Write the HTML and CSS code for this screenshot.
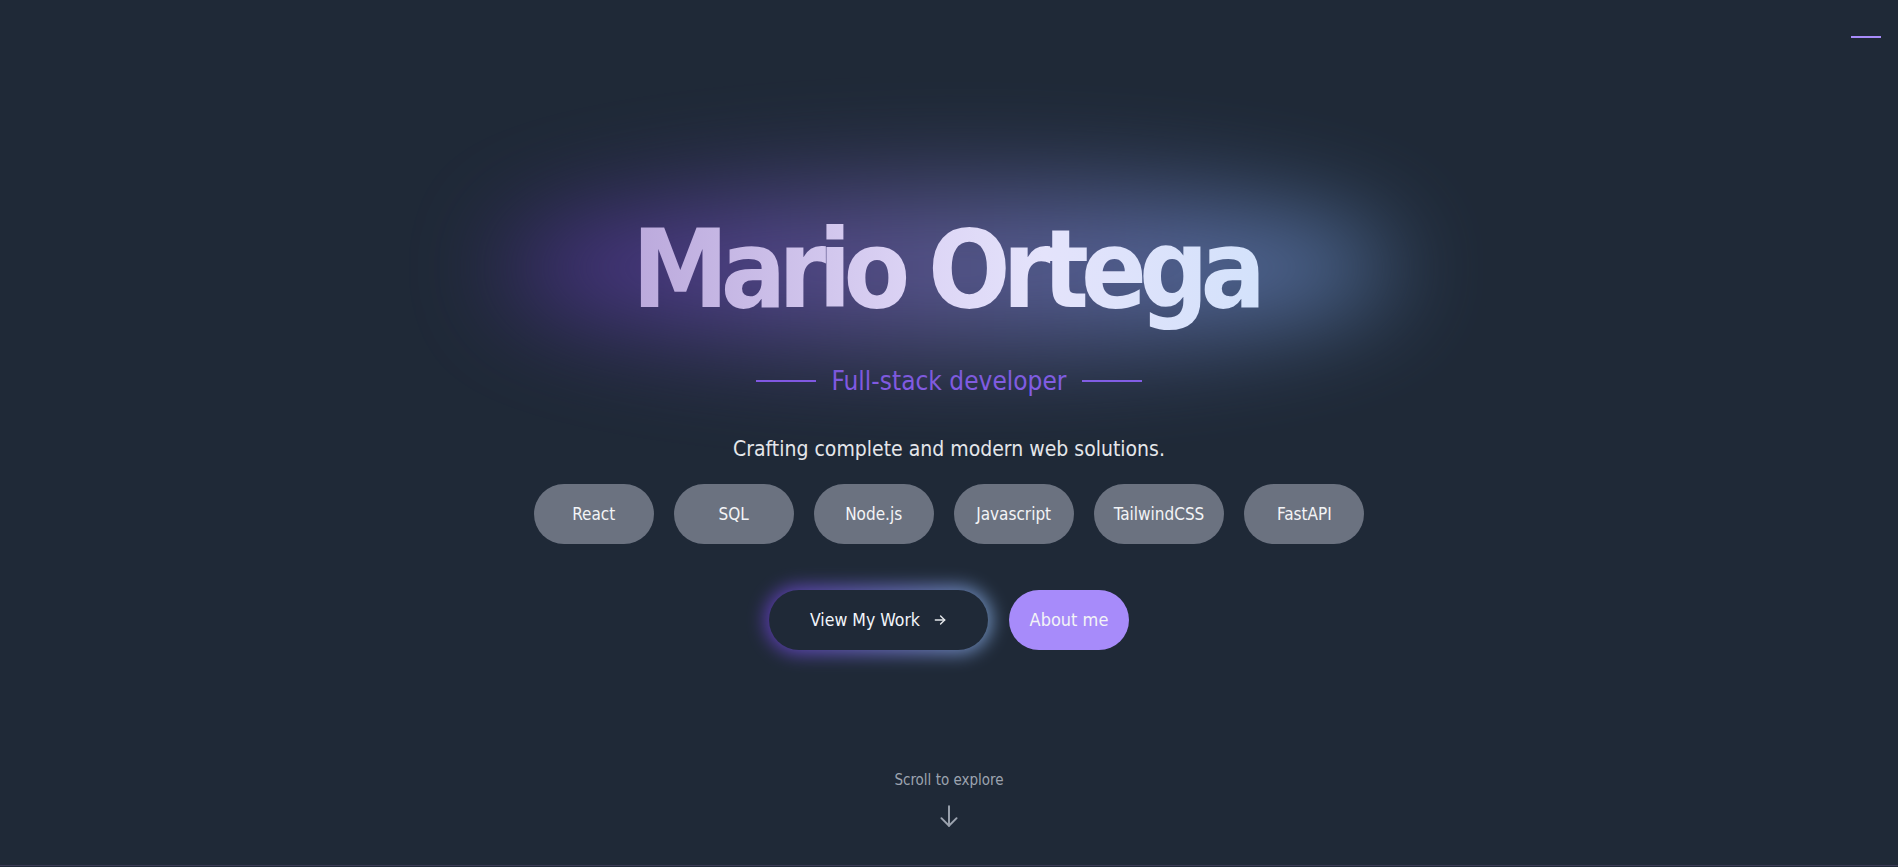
FILE: index.html
```html
<!DOCTYPE html>
<html lang="en">
<head>
<meta charset="utf-8">
<title>Mario Ortega</title>
<link rel="stylesheet" href="styles.css">
</head>
<body>
<button class="menu-btn" aria-label="Menu"><span class="menu-line"></span></button>
<section class="hero">
  <div class="hero-spacer"></div>
  <div class="hero-content">
    <div class="title-wrap">
      <div class="title-glow"></div>
      <h1 class="title">Mario Ortega</h1>
    </div>
    <div class="subtitle-row">
      <span class="sub-line"></span>
      <h2 class="subtitle">Full-stack developer</h2>
      <span class="sub-line"></span>
    </div>
    <p class="tagline">Crafting complete and modern web solutions.</p>
    <ul class="chips">
      <li class="chip">React</li>
      <li class="chip">SQL</li>
      <li class="chip">Node.js</li>
      <li class="chip">Javascript</li>
      <li class="chip">TailwindCSS</li>
      <li class="chip">FastAPI</li>
    </ul>
    <div class="actions">
      <a class="btn-work" href="#work">
        <span class="btn-work-glow"></span>
        <span class="btn-work-inner">View My Work
          <svg class="btn-arrow" width="14" height="14" viewBox="0 0 24 24" fill="none" stroke="currentColor" stroke-width="2.4" stroke-linecap="round" stroke-linejoin="round"><path d="M4 12h16"/><path d="M13 5l7 7-7 7"/></svg>
        </span>
      </a>
      <a class="btn-about" href="#about">About me</a>
    </div>
  </div>
  <div class="hero-bottom">
    <div class="scroll-hint">
      <span class="scroll-text">Scroll to explore</span>
      <svg class="scroll-arrow" width="26" height="26" viewBox="0 0 24 24" fill="none" stroke="currentColor" stroke-width="1.8" stroke-linecap="round" stroke-linejoin="round"><path d="M12 3v18"/><path d="M5 14l7 7 7-7"/></svg>
    </div>
  </div>
</section>
</body>
</html>
```

FILE: styles.css
```css
* { box-sizing: border-box; }
html, body {
  margin: 0;
  padding: 0;
  background: #1f2937;
  overflow: hidden;
}
body {
  font-family: "DejaVu Sans Condensed", "DejaVu Sans", sans-serif;
  font-stretch: condensed;
  color: #e5e7eb;
}
.menu-btn {
  position: absolute;
  top: 26px;
  right: 12px;
  width: 40px;
  height: 22px;
  padding: 0;
  border: 0;
  background: transparent;
  display: flex;
  align-items: center;
  justify-content: center;
}
.menu-line {
  display: block;
  width: 30px;
  height: 2px;
  background: #a78bfa;
}
.hero {
  height: 866px;
  border-bottom: 1px solid #3b3a55;
  display: grid;
  grid-template-rows: 1fr auto 1fr;
  justify-items: center;
}
.hero-content {
  display: flex;
  flex-direction: column;
  align-items: center;
}
.title-wrap {
  position: relative;
  display: flex;
  justify-content: center;
}
.title-glow {
  position: absolute;
  left: -130px;
  right: -130px;
  top: -30px;
  bottom: -5px;
  border-radius: 50%;
  background: linear-gradient(90deg, #4a2c8c 0%, #5a5590 45%, #5a7eae 100%);
  filter: blur(50px);
  opacity: 0.9;
}
.title {
  position: relative;
  margin: 0;
  padding: 0 8px 20px 0;
  font-size: 108px;
  line-height: 1;
  font-weight: 700;
  letter-spacing: -8px;
  background: linear-gradient(90deg, #bba9dc 0%, #dcd4f5 45%, #e4e3fb 65%, #d3e2fb 100%);
  -webkit-background-clip: text;
  background-clip: text;
  color: transparent;
}
.subtitle-row {
  display: flex;
  align-items: center;
  gap: 16px;
  margin-top: 19px;
}
.sub-line {
  width: 60px;
  height: 2px;
  background: #8b5cf6;
}
.subtitle {
  margin: 0;
  font-size: 26px;
  font-weight: 400;
  color: #8b5cf6;
  line-height: 36px;
}
.tagline {
  margin: 35px 0 0;
  font-size: 21px;
  line-height: 30px;
  color: #e5e7eb;
}
.chips {
  list-style: none;
  margin: 20px 0 0;
  padding: 0;
  display: flex;
  gap: 20px;
}
.chip {
  min-width: 120px;
  height: 60px;
  padding: 0 20px;
  border-radius: 30px;
  background: #6b7280;
  color: #f3f4f6;
  font-size: 17px;
  display: flex;
  align-items: center;
  justify-content: center;
}
.actions {
  display: flex;
  gap: 21px;
  margin-top: 46px;
}
.btn-work {
  position: relative;
  display: block;
  text-decoration: none;
}
.btn-work-glow {
  position: absolute;
  inset: -4px;
  border-radius: 34px;
  background: linear-gradient(90deg, #6d3fd6, #8ab4e8);
  filter: blur(9px);
  opacity: 0.75;
}
.btn-work-inner {
  position: relative;
  width: 219px;
  height: 60px;
  border-radius: 30px;
  background: #1f2937;
  color: #f3f6fb;
  font-size: 17.5px;
  font-weight: 400;
  display: flex;
  align-items: center;
  justify-content: center;
  gap: 13px;
}
.btn-arrow { color: #e5e7eb; }
.btn-about {
  width: 120px;
  height: 60px;
  border-radius: 30px;
  background: #a78bfa;
  color: #f3f4f6;
  font-size: 18px;
  font-weight: 400;
  text-decoration: none;
  display: flex;
  align-items: center;
  justify-content: center;
}
.hero-bottom {
  align-self: end;
  padding-bottom: 36px;
}
.scroll-hint {
  display: flex;
  flex-direction: column;
  align-items: center;
  gap: 13px;
  color: #9ca3af;
}
.scroll-text {
  font-size: 15px;
  line-height: 20px;
}
.scroll-arrow { color: #9ca3af; }
```
